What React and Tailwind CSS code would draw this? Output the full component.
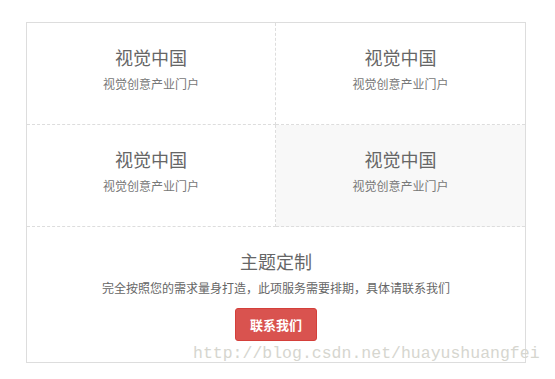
import React from 'react';

const cells = [
  { title: '视觉中国', sub: '视觉创意产业门户', cls: 'border-r border-b' },
  { title: '视觉中国', sub: '视觉创意产业门户', cls: 'border-b' },
  { title: '视觉中国', sub: '视觉创意产业门户', cls: 'border-r border-b' },
  { title: '视觉中国', sub: '视觉创意产业门户', cls: 'border-b bg-[#f8f8f8]' },
];

const App = () => {
  return (
    <div
      className="relative w-[555px] h-[379px] bg-white overflow-hidden"
      style={{ fontFamily: '"Noto Sans CJK SC", "Noto Sans", sans-serif' }}
    >
      <div className="ml-[26px] mt-[22px] w-[500px] border border-[#dddddd]">
        <div className="grid grid-cols-[249px_1fr]">
          {cells.map((c, i) => (
            <div
              key={i}
              className={`h-[102px] border-dashed border-[#dddddd] flex flex-col items-center pt-[21px] ${c.cls}`}
            >
              <div className="text-[18px] leading-[26px] text-[#666666]">{c.title}</div>
              <div className="mt-[5px] text-[12px] leading-[18px] text-[#777777]">{c.sub}</div>
            </div>
          ))}
        </div>

        {/* Bottom section */}
        <div className="h-[135px] flex flex-col items-center pt-[21px]">
          <div className="text-[18px] leading-[26px] text-[#666666]">主题定制</div>
          <div className="mt-[5px] text-[12px] leading-[18px] text-[#666666]">
            完全按照您的需求量身打造，此项服务需要排期，具体请联系我们
          </div>
          <button className="mt-[11px] w-[82px] h-[33px] rounded-[3px] bg-[#d9534f] border border-[#d43f3a] text-white text-[13px] font-semibold">
            联系我们
          </button>
        </div>
      </div>

      {/* watermark */}
      <div
        className="absolute left-[193px] top-[344px] text-[16.5px] leading-[20px] text-[#d6d6cf]"
        style={{ fontFamily: '"Liberation Mono", monospace' }}
      >
        http://blog.csdn.net/huayushuangfei
      </div>
    </div>
  );
};

export default App;
